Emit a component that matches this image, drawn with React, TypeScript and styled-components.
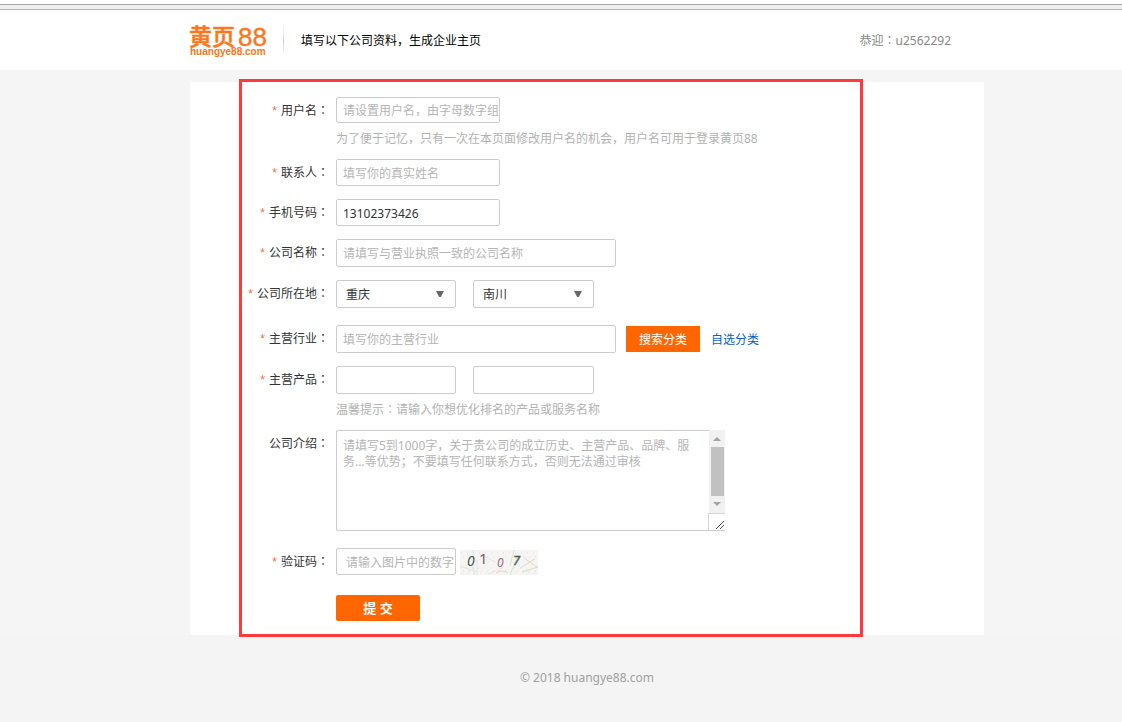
import React from "react";
import styled, { createGlobalStyle } from "styled-components";

const ORANGE = "#ff6600";
const SANS = '"Noto Sans", "Noto Sans CJK SC", sans-serif';
const CENTRED = '"Noto Sans", "Noto Sans CJK TC", sans-serif';
const LATIN = '"Liberation Sans", sans-serif';

const GlobalStyle = createGlobalStyle`
  * { box-sizing: border-box; }
  body {
    margin: 0;
    background: #f5f5f5;
    color: #333;
    font: 12px/20px ${SANS};
  }
  input, select, textarea, button { font-family: inherit; font-size: 12px; }
`;

const BrowserEdge = styled.div`
  height: 6px;
  margin-top: 4px;
  background: #f0f0f0;
  border-top: 1px solid #a6a6a6;
  border-bottom: 1px solid #b2b2b2;
`;

const TopSpace = styled.div`
  display: flow-root;
  background: #fff;
`;

const Band = styled.div`
  padding-left: 52px;
`;

const HeaderBand = styled(Band)`
  background: #fff;
`;

const HeaderInner = styled.header`
  display: flex;
  align-items: center;
  max-width: 794px;
  height: 60px;
  margin: 0 auto;
  padding: 2px 33px 0 0;
`;

const LogoLink = styled.a`
  display: block;
  width: 93px;
  height: 40px;
`;

const Divider = styled.span`
  width: 1px;
  height: 30px;
  background: linear-gradient(#fff, #ccc, #fff);
`;

const Title = styled.h1`
  flex: 1;
  margin: 0 0 0 17px;
  font-size: 12px;
  font-weight: 400;
  color: #000;
`;

const Welcome = styled.span`
  color: #888;
`;

const Panel = styled.main`
  position: relative;
  max-width: 794px;
  margin: 12px auto 0;
  padding: 15px 0 14px;
  background: #fff;
`;

const Highlight = styled.div`
  position: absolute;
  top: -3px;
  bottom: -2px;
  left: 49px;
  width: 624px;
  max-width: calc(100% - 49px);
  border: 3px solid #ff3a3a;
  pointer-events: none;
`;

const Row = styled.div<{ $after?: number }>`
  display: grid;
  grid-template-columns: 139px 1fr;
  column-gap: 7px;
  align-items: start;
  margin-bottom: ${(p) => p.$after ?? 13}px;
`;

const Label = styled.label`
  height: 26px;
  line-height: 28px;
  text-align: right;
  white-space: nowrap;
`;

const Star = styled.span`
  margin-right: 4px;
  color: #ff6a3c;
  font-family: ${LATIN};
`;

const Colon = styled.span`
  font-family: ${CENTRED};
`;

const Controls = styled.div<{ $gap?: number }>`
  display: flex;
  align-items: center;
  gap: ${(p) => p.$gap ?? 0}px;
`;

const TextInput = styled.input<{ $w: number; $h: number; $pad?: number }>`
  width: ${(p) => p.$w}px;
  height: ${(p) => p.$h}px;
  padding: 1px 0 0 ${(p) => p.$pad ?? 6}px;
  border: 1px solid #ccc;
  border-radius: 2px;
  background: #fff;
  color: #333;
  outline: none;
  &::placeholder { color: #b5b5b5; opacity: 1; }
`;

const Hint = styled.p`
  grid-column: 2;
  margin: 6px 0 0;
  color: #b2b2b2;
`;

const SelectBox = styled.div<{ $w: number }>`
  display: grid;
  width: ${(p) => p.$w}px;
  align-items: center;
  > * { grid-area: 1 / 1; }
  > svg { justify-self: end; margin-right: 12px; pointer-events: none; }
`;

const Select = styled.select`
  width: 100%;
  height: 28px;
  padding: 0 24px 0 9px;
  appearance: none;
  border: 1px solid #ccc;
  border-radius: 2px;
  background: #fff;
  color: #333;
  outline: none;
`;

const SearchButton = styled.button`
  width: 74px;
  height: 26px;
  margin-left: 10px;
  padding: 0;
  border: 0;
  background: ${ORANGE};
  color: #fff;
  cursor: pointer;
`;

const PickLink = styled.a`
  margin-left: 11px;
  padding-top: 2px;
  color: #0b60c4;
  text-decoration: none;
`;

const AreaFrame = styled.div`
  display: flex;
  width: 389px;
  height: 101px;
  border: 1px solid #ccc;
  border-right: 0;
  border-radius: 2px 0 0 2px;
`;

const Area = styled.textarea`
  flex: 1;
  min-width: 0;
  padding: 7px 10px 0 6px;
  border: 0;
  background: transparent;
  color: #333;
  line-height: 16px;
  resize: none;
  outline: none;
  overflow: hidden;
  &::placeholder { color: #b5b5b5; opacity: 1; }
`;

const ScrollRail = styled.div`
  display: flex;
  flex-direction: column;
  align-items: flex-end;
  width: 17px;
`;

const Track = styled.div`
  display: flex;
  flex-direction: column;
  align-items: center;
  width: 16px;
  height: 83px;
  margin-top: -1px;
  background: #f1f1f1;
`;

const Thumb = styled.div`
  flex: 1;
  width: 13px;
  background: #c1c1c1;
`;

const Corner = styled.div`
  display: flex;
  flex: 1;
  align-items: flex-end;
  justify-content: flex-end;
  width: 17px;
  border-top: 1px solid #d5d5d5;
  border-left: 1px solid #d5d5d5;
`;

const Captcha = styled.svg`
  margin: 2px 0 0 4px;
`;

const Submit = styled.button`
  grid-column: 2;
  width: 84px;
  height: 26px;
  padding: 0 0 2px;
  border: 0;
  border-radius: 2px;
  background: ${ORANGE};
  color: #fff;
  font-size: 13px;
  font-weight: 700;
  cursor: pointer;
`;

const FooterBand = styled(Band)`
  padding-top: 33px;
  padding-bottom: 34px;
  background: #f4f4f4;
  color: #a0a0a0;
  text-align: center;
`;

function Logo() {
  return (
    <svg width="80" height="40" viewBox="0 0 80 40" overflow="visible" fill="#ff7519" role="img" aria-label="黄页88">
      <text x="-1" y="24" fontSize="23" fontWeight="500" fontFamily={SANS} stroke="#ff7519" strokeWidth="0.5">黄页</text>
      <text x="48" y="25" fontSize="26" fontFamily={LATIN} stroke="#ff7519" strokeWidth="0.4">88</text>
      <text x="0" y="34" fontSize="10" fontWeight="700" fontFamily={LATIN}>huangye88.com</text>
    </svg>
  );
}

function FieldLabel({ htmlFor, required, text }: { htmlFor: string; required?: boolean; text: string }) {
  return (
    <Label htmlFor={htmlFor}>
      {required && <Star>*</Star>}
      {text}
      <Colon lang="zh-TW">：</Colon>
    </Label>
  );
}

function Dropdown({ id, label, value, width }: { id: string; label: string; value: string; width: number }) {
  return (
    <SelectBox $w={width}>
      <Select id={id} aria-label={label} defaultValue={value}>
        <option>{value}</option>
      </Select>
      <svg width="8" height="6" viewBox="0 0 8 6" aria-hidden="true">
        <path d="M0 0h8L4.8 6H3.2z" fill="#666" />
      </svg>
    </SelectBox>
  );
}

function CaptchaImage() {
  return (
    <Captcha width="78" height="25" viewBox="0 0 78 25" overflow="visible" role="img" aria-label="验证码">
      <rect width="78" height="25" fill="#f6f5f3" />
      <g fill="none" strokeWidth="1">
        <path d="M13 0l1 25M17 9v16" stroke="#d5ece2" />
        <path d="M50 25L58 5M54 0l-4 16" stroke="#cde8d6" />
        <path d="M0 16l14 5M20 4l15 8M28 24l14-6" stroke="#eee0ea" />
        <path d="M60 18l15-9M64 8l13 9M62 22l16-5" stroke="#dcdcc0" />
        <path d="M36 23q6-4 12 0" stroke="#ebcfc8" />
      </g>
      <g strokeWidth="1" strokeDasharray="1 5">
        <path d="M1 3h76M3 21h74" stroke="#e4d8e6" />
        <path d="M3 7h74M0 18h78" stroke="#d8e9db" />
        <path d="M4 12h72M2 23h74" stroke="#f0dedb" />
      </g>
      <g fontFamily={SANS}>
        <text x="7" y="16" fontSize="14" fontStyle="italic" fill="#44584e">0</text>
        <text x="19" y="14" fontSize="15" fill="#746078">1</text>
        <text x="37" y="17" fontSize="12" fontStyle="italic" fill="#9c6880">0</text>
        <text x="53" y="15" fontSize="13" fontStyle="italic" fill="#4d5b50" stroke="#4d5b50" strokeWidth="0.4">7</text>
      </g>
    </Captcha>
  );
}

export default function App() {
  return (
    <>
      <GlobalStyle />
      <TopSpace>
        <BrowserEdge />
      </TopSpace>
      <HeaderBand>
        <HeaderInner>
          <LogoLink href="#"><Logo /></LogoLink>
          <Divider />
          <Title>填写以下公司资料，生成企业主页</Title>
          <Welcome>恭迎<Colon lang="zh-TW">：</Colon>u2562292</Welcome>
        </HeaderInner>
      </HeaderBand>
      <Band>
        <Panel>
          <form onSubmit={(e) => e.preventDefault()}>
            <Row $after={10}>
              <FieldLabel htmlFor="user" required text="用户名" />
              <TextInput id="user" $w={164} $h={26} placeholder="请设置用户名，由字母数字组成" />
              <Hint>为了便于记忆，只有一次在本页面修改用户名的机会，用户名可用于登录黄页88</Hint>
            </Row>
            <Row>
              <FieldLabel htmlFor="contact" required text="联系人" />
              <TextInput id="contact" $w={164} $h={27} placeholder="填写你的真实姓名" />
            </Row>
            <Row>
              <FieldLabel htmlFor="phone" required text="手机号码" />
              <TextInput id="phone" $w={164} $h={27} defaultValue="13102373426" />
            </Row>
            <Row>
              <FieldLabel htmlFor="company" required text="公司名称" />
              <TextInput id="company" $w={280} $h={28} placeholder="请填写与营业执照一致的公司名称" />
            </Row>
            <Row $after={17}>
              <FieldLabel htmlFor="province" required text="公司所在地" />
              <Controls $gap={17}>
                <Dropdown id="province" label="省市" value="重庆" width={120} />
                <Dropdown id="city" label="区县" value="南川" width={121} />
              </Controls>
            </Row>
            <Row>
              <FieldLabel htmlFor="industry" required text="主营行业" />
              <Controls>
                <TextInput id="industry" $w={280} $h={28} placeholder="填写你的主营行业" />
                <SearchButton type="button">搜索分类</SearchButton>
                <PickLink href="#">自选分类</PickLink>
              </Controls>
            </Row>
            <Row $after={10}>
              <FieldLabel htmlFor="product1" required text="主营产品" />
              <Controls $gap={17}>
                <TextInput id="product1" $w={120} $h={28} />
                <TextInput id="product2" aria-label="主营产品二" $w={121} $h={28} />
              </Controls>
              <Hint>温馨提示<Colon lang="zh-TW">：</Colon>请输入你想优化排名的产品或服务名称</Hint>
            </Row>
            <Row $after={17}>
              <FieldLabel htmlFor="intro" text="公司介绍" />
              <AreaFrame>
                <Area
                  id="intro"
                  placeholder="请填写5到1000字，关于贵公司的成立历史、主营产品、品牌、服务...等优势；不要填写任何联系方式，否则无法通过审核"
                />
                <ScrollRail aria-hidden="true">
                  <Track>
                    <svg width="16" height="17"><path d="M4 11l4-4 4 4z" fill="#a3a3a3" /></svg>
                    <Thumb />
                    <svg width="16" height="17"><path d="M4 6l4 4 4-4z" fill="#a3a3a3" /></svg>
                  </Track>
                  <Corner>
                    <svg width="10" height="10"><path d="M1 9l8-8M5 9l4-4" stroke="#555" fill="none" /></svg>
                  </Corner>
                </ScrollRail>
              </AreaFrame>
            </Row>
            <Row $after={20}>
              <FieldLabel htmlFor="code" required text="验证码" />
              <Controls>
                <TextInput id="code" $w={120} $h={27} $pad={9} placeholder="请输入图片中的数字" />
                <CaptchaImage />
              </Controls>
            </Row>
            <Row $after={0}>
              <Submit type="submit">提 交</Submit>
            </Row>
          </form>
          <Highlight />
        </Panel>
      </Band>
      <FooterBand as="footer">© 2018 huangye88.com</FooterBand>
    </>
  );
}
